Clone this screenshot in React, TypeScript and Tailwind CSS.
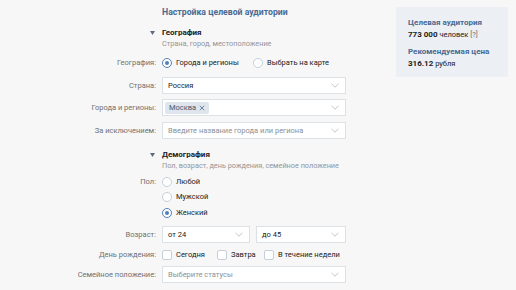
import { useState } from "react";

function Chevron() {
  return (
    <svg width="8" height="5" viewBox="0 0 8 5" className="shrink-0">
      <path d="M0.5 0.8 L4 4.2 L7.5 0.8" fill="none" stroke="#b8c1cc" strokeWidth="0.9" />
    </svg>
  );
}

function Radio({ checked }: { checked?: boolean }) {
  return (
    <span
      className={`flex h-[10px] w-[10px] shrink-0 items-center justify-center rounded-full border bg-white ${
        checked ? "border-[#5181b8]" : "border-[#c5d0db]"
      }`}
    >
      {checked ? <span className="h-[4px] w-[4px] rounded-full bg-[#5181b8]" /> : null}
    </span>
  );
}

function Checkbox() {
  return <span className="block h-[10px] w-[10px] shrink-0 rounded-[2px] border border-[#c5d0db] bg-white" />;
}

function Option({ children, width, checkbox, checked }: { children: React.ReactNode; width?: string; checkbox?: boolean; checked?: boolean }) {
  return (
    <div className={`flex shrink-0 items-center ${width ?? ""}`}>
      {checkbox ? <Checkbox /> : <Radio checked={checked} />}
      <span className="ml-[4px] text-[#222]">{children}</span>
    </div>
  );
}

function Select({ children, placeholder, className = "" }: { children?: React.ReactNode; placeholder?: boolean; className?: string }) {
  return (
    <div
      className={`flex h-[17px] items-center justify-between border border-[#dce1e6] bg-white pl-[5px] pr-[6px] ${
        placeholder ? "text-[#8b8f94]" : "text-[#222]"
      } ${className}`}
    >
      <div className="flex items-center">{children}</div>
      <Chevron />
    </div>
  );
}

function Row({ label, children, className = "" }: { label?: string; children: React.ReactNode; className?: string }) {
  return (
    <div className={`flex items-center ${className}`}>
      <div className="w-[157px] shrink-0 pr-[1px] text-right text-[#6d7175]">{label}</div>
      <div className="ml-[5px] flex flex-1 items-center">{children}</div>
    </div>
  );
}

function Section({ title, subtitle, className = "" }: { title: string; subtitle: string; className?: string }) {
  return (
    <div className={className}>
      <div className="flex h-[12px] items-center">
        <div className="flex w-[157px] shrink-0 justify-end pr-[2px]">
          <svg width="5" height="4" viewBox="0 0 5 4">
            <path d="M0 0 H5 L2.5 4 Z" fill="#5d6b7a" />
          </svg>
        </div>
        <div className="ml-[5px] text-[8px] font-bold text-[#222]">{title}</div>
      </div>
      <div className="ml-[162px] flex h-[10px] items-center text-[7.3px] text-[#939699]">{subtitle}</div>
    </div>
  );
}

export default function App() {
  const [sex] = useState("f");
  return (
    <div
      className="flex h-[290px] w-[516px] overflow-hidden bg-[#f7f7f7] text-[7.5px] leading-none"
      style={{ fontFamily: "Roboto, 'Open Sans', sans-serif" }}
    >
      <div className="w-[346px] shrink-0">
        <div className="ml-[162px] mt-[5px] flex h-[14px] items-center text-[8.7px] font-bold text-[#4a6a92]">
          Настройка целевой аудитории
        </div>
        <Section className="mt-[8px]" title="География" subtitle="Страна, город, местоположение" />

        <Row label="География:" className="mt-[7px] h-[14px]">
          <Option width="w-[91px]" checked>
            Города и регионы
          </Option>
          <Option>Выбрать на карте</Option>
        </Row>

        <Row label="Страна:" className="mt-[7px]">
          <Select className="flex-1">Россия</Select>
        </Row>
        <Row label="Города и регионы:" className="mt-[5px]">
          <Select className="flex-1">
            <span className="-ml-[3px] flex h-[12px] items-center gap-[3px] rounded-[2px] bg-[#dee5ed] px-[4px] text-[#45596e]">
              Москва
              <svg width="6" height="6" viewBox="0 0 6 6">
                <path d="M0.8 0.8 L5.2 5.2 M5.2 0.8 L0.8 5.2" stroke="#6b829c" strokeWidth="1" />
              </svg>
            </span>
          </Select>
        </Row>
        <Row label="За исключением:" className="mt-[6px]">
          <Select className="flex-1" placeholder>
            Введите название города или региона
          </Select>
        </Row>

        <Section className="mt-[10px]" title="Демография" subtitle="Пол, возраст, день рождения, семейное положение" />

        <Row label="Пол:" className="mt-[3px] h-[15px]">
          <Option checked={sex === "a"}>Любой</Option>
        </Row>
        <Row className="h-[15px]">
          <Option checked={sex === "m"}>Мужской</Option>
        </Row>
        <Row className="mt-[1px] h-[15px]">
          <Option checked={sex === "f"}>Женский</Option>
        </Row>

        <Row label="Возраст:" className="mt-[6px]">
          <Select className="w-[88px]">от 24</Select>
          <Select className="ml-[6px] flex-1">до 45</Select>
        </Row>

        <Row label="День рождения:" className="mt-[5px] h-[14px]">
          <Option width="w-[55px]" checkbox>
            Сегодня
          </Option>
          <Option width="w-[47px]" checkbox>
            Завтра
          </Option>
          <Option checkbox>В течение недели</Option>
        </Row>

        <Row label="Семейное положение:" className="mt-[4px]">
          <Select className="flex-1" placeholder>
            Выберите статусы
          </Select>
        </Row>
      </div>

      <div className="ml-[50px] mt-[7px] h-[70px] w-[112px] shrink-0 rounded-[2px] bg-[#eceff3] pl-[12px] pt-[12px] text-[8px]">
        <div className="font-bold text-[#4a6a92]">Целевая аудитория</div>
        <div className="mt-[4px] text-[7.5px] text-[#222]">
          <span className="text-[8px] font-bold">773 000</span> человек <span className="text-[#6d7175]">[?]</span>
        </div>
        <div className="mt-[9px] font-bold text-[#4a6a92]">Рекомендуемая цена</div>
        <div className="mt-[4px] text-[7.5px] text-[#222]">
          <span className="text-[8px] font-bold">316.12</span> рубля
        </div>
      </div>
    </div>
  );
}
